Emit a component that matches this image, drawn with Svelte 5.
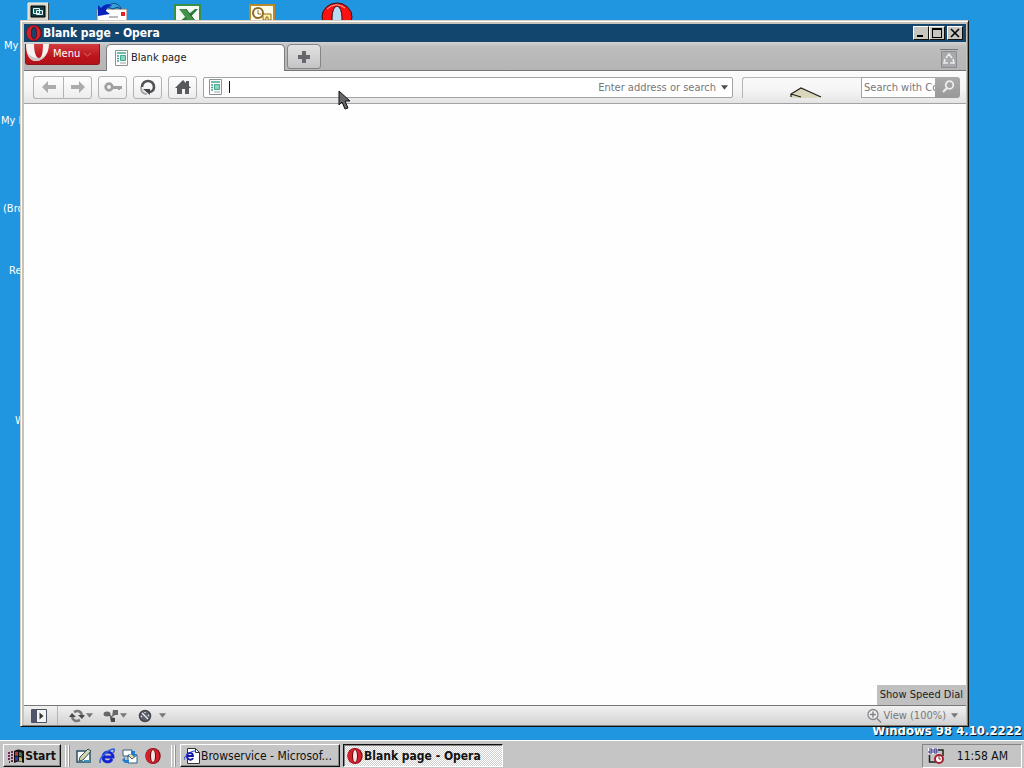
<script lang="ts">
	let address = $state('');
	let query = $state('');

	// icons and captions sit freely on the desktop, partly behind the window
	const captions = [
		{ text: 'My', x: 4, y: 39 },
		{ text: 'My D', x: 1, y: 114 },
		{ text: '(Bro', x: 3, y: 202 },
		{ text: 'Re', x: 9, y: 264 },
		{ text: 'W', x: 15, y: 414 }
	];

	const shortcuts = [
		{ name: 'computer', x: 22 },
		{ name: 'mail', x: 96 },
		{ name: 'excel', x: 171 },
		{ name: 'outlook', x: 246 },
		{ name: 'opera', x: 321 }
	];
</script>

{#snippet opera()}
	<svg class="i16" viewBox="0 0 16 16">
		<ellipse cx="8" cy="8" rx="7.7" ry="8" fill="#7d0610" />
		<ellipse cx="7.6" cy="8" rx="7" ry="7.6" fill="#d3202b" />
		<ellipse cx="8" cy="8" rx="3" ry="6.5" fill="#650910" />
		<ellipse cx="8" cy="8" rx="2" ry="6" fill="#f4e4e4" />
	</svg>
{/snippet}

{#snippet titleLogo()}
	<svg class="i16" viewBox="0 0 16 16">
		<ellipse cx="8" cy="8" rx="7.7" ry="8" fill="#7d0610" />
		<ellipse cx="7.6" cy="8" rx="7" ry="7.6" fill="#d3202b" />
		<ellipse cx="8" cy="8" rx="3" ry="6.6" fill="#5b0a14" />
		<ellipse cx="8" cy="8" rx="2.2" ry="6" fill="#12466e" />
	</svg>
{/snippet}

{#snippet pageIcon()}
	<svg class="page-icon" viewBox="0 0 13 16">
		<path d="M.5.5h12v15H.5z" fill="#fff" stroke="#8a9492" />
		<path d="M2 3h9M2 6h2M2 8.5h2M2 11h2" stroke="#45a691" stroke-width="1.6" />
		<path d="M5.500 5.500h5v5h-5z" fill="#8ad5c0" stroke="#45a691" />
		<path d="M5 13h6" stroke="#9aa5a2" />
	</svg>
{/snippet}

{#snippet caret()}
	<svg class="caret" viewBox="0 0 8 5"><path d="M0 0h8L4 5z" fill="currentColor" /></svg>
{/snippet}

<div class="screen">
	<main class="desktop">
		{#each shortcuts as s}
			<svg class="shortcut" viewBox="0 0 32 32" style="left: {s.x}px">
				{#if s.name === 'computer'}
					<path d="M6 3h20v20H6z" fill="#d8d4c8" stroke="#f4f2ea" />
					<path d="M26.500 3v20M6 23.500h20" stroke="#44453f" />
					<path d="M9 6h14v11H9z" fill="#103c40" stroke="#000" />
					<path d="M11.500 8.500h6v5h-6zM14.500 10.500h6v4h-6z" fill="#1b6670" stroke="#e6f2f0" />
				{:else if s.name === 'mail'}
					<path d="M1 9h30v19H1z" fill="#fff" stroke="#777" />
					<path d="M12 7C14 2 23 2 25 9l-4-2-4 2z" fill="#36a5df" stroke="#17457d" />
					<path d="M2 5l3 3c3-4 8-5 11-2-4 0-6 3-6 5l4 3-12 2z" fill="#0724ba" />
					<path d="M25 12h4v4h-4z" fill="#e52222" />
					<path d="M13 17h9" stroke="#777" />
				{:else if s.name === 'excel'}
					<path d="M4 5h25v24H4z" fill="#f4faf4" stroke="#378f48" stroke-width="2" />
					<path d="M24 9h3l-12 13H8z" fill="#267c37" />
					<path d="M8 9h7l10 13h-7z" fill="#43934e" />
					<path d="M15 9l10 13" stroke="#1f5a2a" />
				{:else if s.name === 'outlook'}
					<path d="M4 5h24v24H4z" fill="#fffce9" stroke="#b78a27" stroke-width="2" />
					<circle cx="12" cy="13" r="5" fill="#fff" stroke="#8e6a1c" stroke-width="2" />
					<path d="M12 10v4h3" fill="none" stroke="#8e6a1c" />
					<path d="M17 14h8v6h-3v-3h-2v3h-3z" fill="#fff2a8" stroke="#8e6a1c" />
				{:else}
					<ellipse cx="16" cy="17" rx="15" ry="14" fill="#fb1111" stroke="#3a0c10" />
					<ellipse cx="16" cy="18" rx="5" ry="12" fill="#b8dcf4" stroke="#3a0c10" />
					<path d="M6 9q9-8 18-1" fill="none" stroke="#ffb0a8" />
				{/if}
			</svg>
		{/each}
		{#each captions as c}
			<span class="caption" style="left: {c.x}px; top: {c.y}px">{c.text}</span>
		{/each}
		<div class="watermark">Windows 98 4.10.2222</div>

		<section class="window">
			<header class="title-bar">
				{@render titleLogo()}
				<h1>Blank page - Opera</h1>
				<button class="win-btn" aria-label="Minimize">
					<svg viewBox="0 0 12 10"><path d="M2 7h6v2H2z" /></svg>
				</button>
				<button class="win-btn" aria-label="Maximize">
					<svg viewBox="0 0 12 10"><path d="M1 0h10v10H1zm1 2v7h8V2z" fill-rule="evenodd" /></svg>
				</button>
				<button class="win-btn close" aria-label="Close">
					<svg viewBox="0 0 12 10"><path d="M2 1l8 8M10 1L2 9" stroke="#000" stroke-width="1.6" /></svg>
				</button>
			</header>

			<div class="tab-bar">
				<button class="menu">
					<svg class="menu-logo" viewBox="0 0 23 20">
						<path d="M0 0c0 10 3 17 10 17S23 10 23 0h-6c0 8-1 14-4 14S8 8 8 0z" fill="#f6f2f2" />
						<path d="M1 8c2 6 5 9 9 9s10-3 12-11c-2 5-5 8-9 8S4 13 1 8" fill="#cfc5c5" />
					</svg>
					Menu
					<svg class="chevron" viewBox="0 0 7 5"><path d="M0 1l3.500 3L7 1" fill="none" stroke="#e06a6a" /></svg>
				</button>
				<button class="tab">{@render pageIcon()}Blank page</button>
				<button class="new-tab" aria-label="New tab">
					<svg viewBox="0 0 12 12"><path d="M4 0h4v4h4v4H8v4H4V8H0V4h4z" fill="#66666c" /></svg>
				</button>
				<button class="trash" aria-label="Closed tabs">
					<svg viewBox="0 0 18 20">
						<path d="M1.500 3.500h15v16h-15z" fill="#a8a9ac" stroke="#8b8c90" />
						<path d="M0 1.500h18" stroke="#77787c" />
						<path d="M6 10l3-4 3 4M13 11l1 4h-4M8 15H4l1-4" fill="none" stroke="#ececee" stroke-width="1.6" />
					</svg>
				</button>
			</div>

			<nav class="nav-bar">
				<div class="pair">
					<button class="tool" aria-label="Back">
						<svg class="i16" viewBox="0 0 16 16"><path d="M1 8l6-6v4h8v4H7v4z" fill="#ababab" /></svg>
					</button>
					<button class="tool" aria-label="Forward">
						<svg class="i16" viewBox="0 0 16 16"><path d="M15 8L9 2v4H1v4h8v4z" fill="#ababab" /></svg>
					</button>
				</div>
				<button class="tool" aria-label="Wand">
					<svg class="key" viewBox="0 0 18 16">
						<circle cx="5" cy="8" r="3.3" fill="none" stroke="#a0a0a0" stroke-width="2.8" />
						<path d="M8 7h10v3h-2v1h-2v-1H8z" fill="#a0a0a0" />
					</svg>
				</button>
				<button class="tool" aria-label="Reload">
					<svg class="i16" viewBox="0 0 16 16">
						<path d="M2 8C2 0 14 0 14 8c0 3-2 5-5 5" fill="none" stroke="#505154" stroke-width="2.6" />
						<path d="M1 8c0 4 2 7 6 7" fill="none" stroke="#a8a8aa" stroke-width="2" />
						<path d="M3 10h7v6z" fill="#404144" />
					</svg>
				</button>
				<button class="tool" aria-label="Home">
					<svg class="i16" viewBox="0 0 16 16"><path d="M8 1L0 9h2v6h5v-5h3v5h4V9h2l-2-2V2h-3v2z" fill="#58595c" /></svg>
				</button>
				<div class="address">
					{@render pageIcon()}
					<span class="text-caret"></span>
					<input type="text" aria-label="Address" placeholder="Enter address or search" bind:value={address} />
					<button class="drop" aria-label="Show history">{@render caret()}</button>
				</div>
				<div class="search">
					<div class="search-space">
						<svg viewBox="0 0 32 11">
							<path d="M1 11V7l10-6 20 9-6 1z" fill="#d9d8bd" />
							<path d="M1 10V7l10-6 20 9M1 7l10 3" fill="none" stroke="#24241c" stroke-width="1.3" />
						</svg>
					</div>
					<input type="text" aria-label="Search" placeholder="Search with Cc" bind:value={query} />
					<button class="go" aria-label="Search">
						<svg class="i16" viewBox="0 0 16 16">
							<circle cx="9.500" cy="6" r="3.800" fill="none" stroke="#ededed" stroke-width="1.800" />
							<path d="M7 9l-4 4" stroke="#ededed" stroke-width="2.200" />
						</svg>
					</button>
				</div>
			</nav>

			<div class="page">
				<button class="speed-dial">Show Speed Dial</button>
			</div>

			<footer class="status-bar">
				<button class="panels" aria-label="Panels">
					<svg class="i16" viewBox="0 0 16 16">
						<path d="M.5 1.5h15v13H.5z" fill="#f4f4f6" stroke="#50515f" />
						<path d="M1 2h5v12H1z" fill="#50546a" />
						<path d="M8.500 4.500v7l4-3.500z" fill="#333" />
					</svg>
				</button>
				<button class="status-btn" aria-label="Synchronize">
					<svg class="i16" viewBox="0 0 16 16">
						<path d="M5 4q6-3 8 3" fill="none" stroke="#77787a" stroke-width="2.600" />
						<path d="M11 12q-6 3-8-3" fill="none" stroke="#77787a" stroke-width="2.600" />
						<path d="M0 9l3-4 4 4zM9 7h7l-3 4z" fill="#48494c" />
					</svg>
					{@render caret()}
				</button>
				<button class="status-btn" aria-label="Unite">
					<svg class="i16" viewBox="0 0 16 16">
						<ellipse cx="4" cy="6" rx="3.500" ry="2.500" fill="#66676a" />
						<path d="M10 2h5v5h-3l-3 2z" fill="#66676a" />
						<path d="M7 9l5 1v4H8z" fill="#48494c" />
						<path d="M6 7l3 2" stroke="#55565a" stroke-width="1.500" />
					</svg>
					{@render caret()}
				</button>
				<button class="status-btn turbo" aria-label="Turbo">
					<svg class="i16" viewBox="0 0 16 16">
						<circle cx="8" cy="8" r="5.500" fill="#5c5e6a" stroke="#454650" stroke-width="1.500" />
						<path d="M5 5l6 6M4 9l1-1M8 4v1M12 7l-1 1" stroke="#f0f0f2" stroke-width="1.300" />
					</svg>
					{@render caret()}
				</button>
				<button class="view">
					<svg class="i16" viewBox="0 0 16 16">
						<circle cx="7" cy="6.500" r="5" fill="#eee" stroke="#85868a" stroke-width="1.300" />
						<path d="M4 6.500h6M7 3.500v6M11 10.500l4 4" stroke="#85868a" stroke-width="1.500" />
					</svg>
					View (100%)
					{@render caret()}
				</button>
			</footer>
		</section>

		<svg class="cursor" viewBox="0 0 12 20">
			<path d="M1 1v14l3-3 3 7 3-1-3-7h5z" fill="#66666a" stroke="#111" />
		</svg>
	</main>

	<footer class="taskbar">
		<button class="start">
			<svg class="i16" viewBox="0 0 16 16">
				<path d="M6 3q4-3 10 0v12q-5-3-10 0z" fill="#111" />
				<path d="M7 4q2-1 3 0v4q-2-1-3 0z" fill="#b33b42" />
				<path d="M11 4q2 0 3 1v4q-1-1-3-1z" fill="#3b7850" />
				<path d="M7 9q2-1 3 0v4q-2-1-3 0z" fill="#343ab4" />
				<path d="M11 9q2 0 3 1v4q-1-1-3-1z" fill="#bfb04b" />
				<path d="M0 5h2M3 4h2M0 8h2M3 7h2M0 11h2M3 10h2M1 14h1M3 13h2" stroke="#7c2459" stroke-width="2" />
			</svg>
			Start
		</button>
		<span class="grip"></span>
		<div class="quick">
			<button aria-label="Show desktop">
				<svg class="i16" viewBox="0 0 16 16">
					<path d="M1 3h13v11H1z" fill="#fff" stroke="#285165" stroke-width="1.500" />
					<path d="M3 13l1-4 8-8 3 2-8 9z" fill="#d9d4a8" stroke="#27536c" />
					<path d="M8 12h6v2H8z" fill="#3d8fbc" />
				</svg>
			</button>
			<button aria-label="Internet Explorer">
				<svg class="i16" viewBox="0 0 16 16">
					<path d="M13 11c-2 4-9 4-9-2 0-7 10-6 10 0H5" fill="none" stroke="#1422cf" stroke-width="2.800" />
					<path d="M1 15C0 9 10 1 15 1c1 1 0 2-1 4" fill="none" stroke="#2c65e2" stroke-width="1.500" />
				</svg>
			</button>
			<button aria-label="Outlook Express">
				<svg class="i16" viewBox="0 0 16 16">
					<path d="M1 2h9v6H1zM6 7h9v8H6z" fill="#fff" stroke="#385c83" />
					<path d="M6 7l4 4 5-4" fill="#efe687" stroke="#385c83" />
					<path d="M9 3h4v3h2l-3 3-3-3zM7 12H3V9L0 12l3 3h4z" fill="#237dcb" />
				</svg>
			</button>
			<button aria-label="Opera">{@render opera()}</button>
		</div>
		<span class="grip"></span>
		<button class="task">
			<svg class="i16" viewBox="0 0 16 16">
				<path d="M3.500.500h8l4 4v11h-12z" fill="#fff" stroke="#333" />
				<path d="M11.500.500v4h4" fill="none" stroke="#333" />
				<path d="M9 10c-1 3-6 2-6-2s6-4 6 0H3" fill="none" stroke="#1818a8" stroke-width="1.800" />
				<path d="M0 12C0 8 6 3 11 3" fill="none" stroke="#2b43ce" />
			</svg>
			Browservice - Microsof...
		</button>
		<button class="task active">{@render opera()}Blank page - Opera</button>
		<div class="tray">
			<svg class="i16" viewBox="0 0 16 16">
				<path d="M0 0h10v6H0z" fill="#fff" />
				<path d="M1 1h3v4H1V3h3M6 1h3v4H6zM6 3h3" fill="none" stroke="#29217d" />
				<path d="M1.500 7v7h8M10 2h5v6" fill="none" stroke="#222" stroke-width="1.500" />
				<circle cx="11" cy="11" r="4" fill="#fff" stroke="#a5222c" stroke-width="2" />
				<path d="M11 8v3h2" fill="none" stroke="#a5222c" />
			</svg>
			<time>11:58 AM</time>
		</div>
	</footer>
</div>

<style>
	:global(body) {
		margin: 0;
	}

	.screen {
		display: flex;
		flex-direction: column;
		height: 100vh;
		overflow: hidden;
		font: 11px/14px 'DejaVu Sans Condensed', 'Noto Sans', sans-serif;
		color: #222;
	}

	.screen * {
		box-sizing: border-box;
	}

	button,
	input {
		font: inherit;
		color: inherit;
		margin: 0;
		padding: 0;
		border: 0;
		background: none;
	}

	button {
		display: flex;
		align-items: center;
		justify-content: center;
		white-space: nowrap;
	}

	svg {
		display: block;
		flex: none;
	}

	.i16 {
		width: 16px;
		height: 16px;
	}

	.page-icon {
		width: 13px;
		height: 16px;
	}

	.caret {
		width: 7px;
		height: 5px;
	}

	.desktop {
		position: relative;
		flex: 1;
		min-height: 0;
		overflow: hidden;
		background: #2196e0;
	}

	.shortcut {
		position: absolute;
		top: 0;
		width: 32px;
		height: 32px;
	}

	.caption {
		position: absolute;
		color: #fff;
		white-space: nowrap;
	}

	.watermark {
		position: absolute;
		right: 2px;
		bottom: 2px;
		font: bold 13px/14px 'DejaVu Sans Condensed', 'Noto Sans', sans-serif;
		color: #fff;
		text-shadow: 1px 1px #07182a;
	}

	.window {
		position: absolute;
		inset: 20px 55px 13px 20px;
		display: flex;
		flex-direction: column;
		padding: 3px 2px 1px 3px;
		border: 1px solid;
		border-color: #d4d0c8 #111 #111 #d4d0c8;
		background: #c8c4bc;
		box-shadow: inset 1px 1px #fff, inset -1px -1px #85827d;
	}

	.title-bar {
		display: flex;
		align-items: center;
		flex: none;
		height: 18px;
		padding: 0 3px 0 2px;
		background: #12466e;
		color: #fff;
	}

	h1 {
		flex: 1;
		margin: 0 0 0 1px;
		font: bold 12px/16px 'DejaVu Sans Condensed', 'Noto Sans', sans-serif;
	}

	.win-btn {
		width: 16px;
		height: 14px;
		border: 1px solid;
		border-color: #fff #111 #111 #fff;
		background: #c8c6c1;
	}

	.win-btn svg {
		width: 12px;
		height: 10px;
	}

	.close {
		margin-left: 2px;
	}

	.tab-bar {
		display: flex;
		align-items: flex-start;
		flex: none;
		height: 29px;
		padding: 2px 8px 0 1px;
		border-bottom: 1px solid #77777a;
		background: linear-gradient(#d2d2d2, #bdbdbd 5px, #b5b5b5);
	}

	.menu {
		justify-content: flex-start;
		gap: 4px;
		width: 75px;
		height: 21px;
		border: 1px solid #8f141b;
		border-top: 0;
		border-radius: 0 0 3px 3px;
		background: linear-gradient(#d13b40, #bd151d 60%, #b21119);
		color: #fff;
	}

	.menu-logo {
		width: 23px;
		height: 20px;
	}

	.chevron {
		width: 7px;
		height: 5px;
	}

	.tab {
		align-self: stretch;
		justify-content: flex-start;
		gap: 3px;
		width: 179px;
		margin: 0 2px -1px 6px;
		padding-left: 8px;
		border: 1px solid #7c7c80;
		border-bottom: 0;
		border-radius: 5px 5px 0 0;
		background: #fcfcfc;
	}

	.new-tab {
		width: 34px;
		height: 25px;
		border: 1px solid #858589;
		border-radius: 4px 4px 3px 3px;
		background: linear-gradient(#e2e2e2, #c4c4c4);
	}

	.new-tab svg {
		width: 12px;
		height: 12px;
	}

	.trash {
		margin: 4px 0 0 auto;
	}

	.trash svg {
		width: 18px;
		height: 20px;
	}

	.nav-bar {
		display: flex;
		align-items: center;
		flex: none;
		gap: 6px;
		height: 33px;
		padding: 0 6px 0 9px;
		border-bottom: 1px solid #a3a3a5;
		background: linear-gradient(#fcfcfc, #f5f5f5 60%, #e4e4e5);
	}

	.pair {
		display: flex;
	}

	.tool {
		width: 29px;
		height: 23px;
		border: 1px solid #b2b2b5;
		border-radius: 3px;
		background: linear-gradient(#fefefe, #ededee);
	}

	.pair .tool:first-child {
		width: 30px;
		border-right: 0;
		border-radius: 3px 0 0 3px;
	}

	.pair .tool:last-child {
		border-radius: 0 3px 3px 0;
	}

	.key {
		width: 18px;
		height: 16px;
	}

	.address {
		display: flex;
		align-items: center;
		flex: 1;
		min-width: 0;
		height: 21px;
		margin-right: 3px;
		padding-left: 5px;
		border: 1px solid #a3a3a6;
		border-radius: 2px;
		background: #fff;
	}

	.text-caret {
		width: 1px;
		height: 12px;
		margin-left: 7px;
		background: #111;
	}

	.address input {
		flex: 1;
		min-width: 0;
		height: 19px;
		outline: 0;
	}

	.address input::placeholder {
		text-align: right;
	}

	input::placeholder {
		color: #77777a;
		opacity: 1;
	}

	.drop {
		width: 16px;
		height: 19px;
		color: #4c4c50;
	}

	.search {
		display: flex;
		width: 218px;
		height: 21px;
	}

	.search-space {
		display: flex;
		align-items: flex-end;
		justify-content: center;
		flex: 1;
		padding-left: 8px;
		border-top: 1px solid #b5b5b7;
		border-left: 1px solid #b5b5b7;
		border-radius: 3px 0 0 0;
	}

	.search-space svg {
		width: 32px;
		height: 11px;
	}

	.search input {
		width: 74px;
		padding: 1px 0 0 2px;
		border: 1px solid #a3a3a6;
		border-right: 0;
		background: #fff;
		outline: 0;
	}

	.go {
		width: 25px;
		border-radius: 0 3px 3px 0;
		background: linear-gradient(#aaa, #999);
	}

	.page {
		display: flex;
		align-items: flex-end;
		justify-content: flex-end;
		flex: 1;
		min-height: 0;
		background: #fefefe;
	}

	.speed-dial {
		height: 20px;
		padding: 0 3px;
		background: #c0c0c0;
	}

	.status-bar {
		display: flex;
		align-items: center;
		flex: none;
		height: 20px;
		padding: 0 8px 0 7px;
		border-top: 1px solid #77777a;
		background: linear-gradient(#f1f1f1, #d2d2d2);
		color: #77777a;
	}

	.panels {
		align-self: stretch;
		margin-right: 11px;
		padding-right: 10px;
		border-right: 1px solid #b5b5b7;
	}

	.status-btn {
		gap: 1px;
		margin-right: 10px;
	}

	.turbo {
		gap: 6px;
	}

	.view {
		gap: 1px;
		margin-left: auto;
	}

	.view .caret {
		margin-left: 4px;
	}

	.cursor {
		position: absolute;
		top: 90px;
		left: 338px;
		width: 12px;
		height: 20px;
	}

	.taskbar {
		display: flex;
		align-items: center;
		flex: none;
		height: 28px;
		padding: 2px 2px 0 3px;
		border-top: 1px solid #fff;
		background: #c5c5c5;
		color: #111;
	}

	.start,
	.task {
		height: 23px;
		border: 1px solid;
		border-color: #fff #111 #111 #fff;
		box-shadow: inset -1px -1px #858585;
	}

	.start {
		gap: 1px;
		width: 58px;
		font-size: 12px;
		font-weight: bold;
	}

	.grip {
		width: 4px;
		height: 22px;
		margin: 0 4px;
		border-right: 1px solid #fff;
		border-left: 1px solid #fff;
		box-shadow: 1px 0 #929292;
	}

	.quick {
		display: flex;
		gap: 7px;
		padding: 0 6px 0 3px;
	}

	.task {
		justify-content: flex-start;
		gap: 1px;
		width: 160px;
		margin-right: 3px;
		padding-left: 3px;
		font-size: 12px;
	}

	.grip + .task {
		margin-left: 1px;
	}

	.active {
		border-color: #111 #fff #fff #111;
		background: repeating-conic-gradient(#fff 0 25%, #cfcfcf 0 50%) 0 0 / 2px 2px;
		box-shadow: inset 1px 1px #858585;
		font-weight: bold;
	}

	.tray {
		display: flex;
		align-items: center;
		gap: 13px;
		height: 24px;
		margin-left: auto;
		padding: 0 13px 0 5px;
		border: 1px solid;
		border-color: #858585 #fff #fff #858585;
		font-size: 12px;
	}
</style>
